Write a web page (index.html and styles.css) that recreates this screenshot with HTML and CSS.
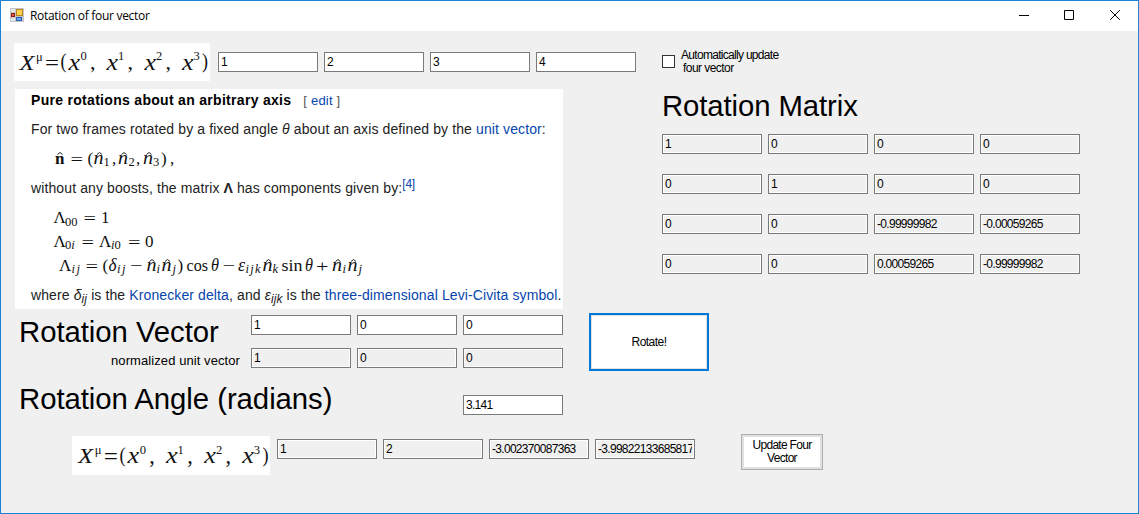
FILE: index.html
```html
<!DOCTYPE html>
<html lang="en">
<head>
<meta charset="utf-8">
<title>Rotation of four vector</title>
<link rel="stylesheet" href="styles.css">
</head>
<body>
<div class="window">
  <header class="titlebar">
    <svg class="app-icon" width="14" height="14" viewBox="0 0 14 14">
      <rect width="14" height="14" fill="#c4c6c9"/>
      <rect x="1" y="1" width="4" height="3" fill="#e6e7e9"/>
      <rect x="1" y="10" width="4" height="3" fill="#e6e7e9"/>
      <rect x="6.500" y="1.500" width="6" height="6" fill="#fbd04f" stroke="#b9861b"/>
      <rect x="1.500" y="5.500" width="3" height="3" fill="#d8584a" stroke="#961d17"/>
      <rect x="6.500" y="9.500" width="5" height="3" fill="#6ea6f0" stroke="#2b62b8"/>
    </svg>
    <span class="title">Rotation of four vector</span>
    <svg class="controls" width="102" height="11" viewBox="0 0 102 11" fill="none" stroke="#000">
      <path d="M0 5.500h10"/>
      <path d="M45.500 .5h9v9h-9z"/>
      <path d="M91.200 .2l9.600 9.600M100.800 .2l-9.600 9.600"/>
    </svg>
  </header>

  <main class="form">
    <div class="upper">
      <section class="left">
        <div class="input-row">
          <svg class="formula" width="196" height="38" viewBox="0 0 196 38">
            <g class="var"><text class="cap" x="5.500" y="26.500" textLength="15" lengthAdjust="spacingAndGlyphs">X</text><text x="54.500" y="26.500" textLength="11.500" lengthAdjust="spacingAndGlyphs">x</text><text x="92.500" y="26.500" textLength="11.500" lengthAdjust="spacingAndGlyphs">x</text><text x="130.500" y="26.500" textLength="11.500" lengthAdjust="spacingAndGlyphs">x</text><text x="168" y="26.500" textLength="11.500" lengthAdjust="spacingAndGlyphs">x</text></g>
            <g class="sup"><text x="22" y="17.500">μ</text><text x="66.500" y="17">0</text><text x="104" y="17">1</text><text x="142" y="17">2</text><text x="179.500" y="17">3</text></g>
            <g class="op"><text x="31" y="27" textLength="14" lengthAdjust="spacingAndGlyphs">=</text><text class="paren" x="46.500" y="25" textLength="6" lengthAdjust="spacingAndGlyphs">(</text><text x="76" y="26">,</text><text x="113.500" y="26">,</text><text x="151.500" y="26">,</text><text class="paren" x="188" y="25" textLength="6" lengthAdjust="spacingAndGlyphs">)</text></g>
          </svg>
          <div class="fields"><div class="field">1</div><div class="field">2</div><div class="field">3</div><div class="field">4</div></div>
        </div>

        <article class="wiki">
          <h3 class="wiki-title"><span class="wiki-name">Pure rotations about an arbitrary axis</span> <span class="edit">[ <a>edit</a> ]</span></h3>
          <p class="line-frames">For two frames rotated by a fixed angle <i>θ</i> about an axis defined by the <a>unit vector</a>:</p>
          <svg class="math" width="548" height="37" viewBox="15 140 548 37">
            <g class="n"><text x="93.500" y="164" textLength="10" lengthAdjust="spacingAndGlyphs">n</text><text x="118" y="164" textLength="10" lengthAdjust="spacingAndGlyphs">n</text><text x="143" y="164" textLength="10" lengthAdjust="spacingAndGlyphs">n</text></g>
            <g class="m"><text class="b" x="55" y="164">n</text><text x="70.500" y="165" textLength="12.500" lengthAdjust="spacingAndGlyphs">=</text><text x="87.500" y="164">(</text><text x="112" y="164">,</text><text x="136" y="164">,</text><text x="161" y="164">)</text><text x="170" y="164">,</text></g>
            <g class="s"><text x="103.500" y="166">1</text><text x="128.500" y="166">2</text><text x="153" y="166">3</text></g>
            <path class="hat" d="M57.500 154.500l2.500-2 2.500 2M97 154.500l2.500-2 2.500 2M121.500 154.500l2.500-2 2.500 2M146.500 154.500l2.500-2 2.500 2"/>
          </svg>
          <p class="line-boosts">without any boosts, the matrix <b>Λ</b> has components given by:<sup>[4]</sup></p>
          <svg class="math" width="548" height="85" viewBox="15 199 548 85">
            <g class="m">
              <text x="53.500" y="223">Λ</text><text x="83.500" y="224" textLength="12.500" lengthAdjust="spacingAndGlyphs">=</text><text x="101" y="223">1</text>
              <text x="53.500" y="247">Λ</text><text x="81.500" y="248" textLength="12.500" lengthAdjust="spacingAndGlyphs">=</text><text x="99" y="247">Λ</text><text x="128" y="248" textLength="12.500" lengthAdjust="spacingAndGlyphs">=</text><text x="145" y="247">0</text>
              <text x="59" y="271">Λ</text><text x="85.500" y="272" textLength="12.500" lengthAdjust="spacingAndGlyphs">=</text><text x="102.500" y="271">(</text><text x="130" y="271" textLength="12.500" lengthAdjust="spacingAndGlyphs">−</text><text x="177.500" y="271">)</text><text x="186.500" y="271" textLength="21.500" lengthAdjust="spacingAndGlyphs">cos</text><text x="222.500" y="271" textLength="12.500" lengthAdjust="spacingAndGlyphs">−</text><text x="281.500" y="271" textLength="21" lengthAdjust="spacingAndGlyphs">sin</text><text x="316" y="272" textLength="12.500" lengthAdjust="spacingAndGlyphs">+</text>
            </g>
            <g class="n"><text x="108.500" y="271" textLength="8" lengthAdjust="spacingAndGlyphs">δ</text><text x="146.500" y="271" textLength="10" lengthAdjust="spacingAndGlyphs">n</text><text x="161.500" y="271" textLength="10" lengthAdjust="spacingAndGlyphs">n</text><text x="211" y="271" textLength="8" lengthAdjust="spacingAndGlyphs">θ</text><text x="238" y="271">ε</text><text x="262.500" y="271" textLength="10" lengthAdjust="spacingAndGlyphs">n</text><text x="305" y="271" textLength="8" lengthAdjust="spacingAndGlyphs">θ</text><text x="332" y="271" textLength="10" lengthAdjust="spacingAndGlyphs">n</text><text x="347.500" y="271" textLength="10" lengthAdjust="spacingAndGlyphs">n</text></g>
            <g class="s"><text x="65" y="225.500">00</text><text x="65" y="249">0<tspan class="i">i</tspan></text><text x="111" y="249"><tspan class="i">i</tspan>0</text></g>
            <g class="s i"><text x="71.500" y="273" textLength="8.500">ij</text><text x="117" y="273" textLength="8.500">ij</text><text x="156.500" y="273">i</text><text x="172.500" y="273">j</text><text x="245.500" y="273" textLength="15">ijk</text><text x="272.500" y="273">k</text><text x="342.500" y="273">i</text><text x="358.500" y="273">j</text></g>
            <path class="hat" d="M149.500 261.500l2.500-2 2.500 2M165 261.500l2.500-2 2.500 2M266 261.500l2.500-2 2.500 2M335.500 261.500l2.500-2 2.500 2M351 261.500l2.500-2 2.500 2"/>
          </svg>
          <p class="line-where">where <i>δ<sub>ij</sub></i> is the <a>Kronecker delta</a>, and <i>ε<sub>ijk</sub></i> is the <a>three-dimensional Levi-Civita symbol</a>.</p>
        </article>

        <div class="rotation">
          <div class="labels">
            <h2>Rotation Vector</h2>
            <div class="norm">normalized unit vector</div>
            <h2 class="angle">Rotation Angle (radians)</h2>
          </div>
          <div class="vector">
            <div class="fields"><div class="field">1</div><div class="field">0</div><div class="field">0</div></div>
            <div class="fields"><div class="field ro">1</div><div class="field ro">0</div><div class="field ro">0</div></div>
            <div class="field radians">3.141</div>
          </div>
          <button class="rotate">Rotate!</button>
        </div>
      </section>

      <section class="right">
        <div class="auto">
          <span class="check"></span>
          <div class="auto-text"><div class="auto-first">Automatically update</div><div class="auto-second">four vector</div></div>
        </div>
        <h2 class="matrix-title">Rotation Matrix</h2>
        <div class="matrix">
          <div class="field ro">1</div><div class="field ro">0</div><div class="field ro">0</div><div class="field ro">0</div>
          <div class="field ro">0</div><div class="field ro">1</div><div class="field ro">0</div><div class="field ro">0</div>
          <div class="field ro">0</div><div class="field ro">0</div><div class="field ro">-0.99999982</div><div class="field ro">-0.00059265</div>
          <div class="field ro">0</div><div class="field ro">0</div><div class="field ro">0.00059265</div><div class="field ro">-0.99999982</div>
        </div>
      </section>
    </div>

    <div class="result">
      <svg class="formula" width="198" height="39" viewBox="-.5 -.6 196 38.600">
        <g class="var"><text class="cap" x="5.500" y="26.500" textLength="15" lengthAdjust="spacingAndGlyphs">X</text><text x="54.500" y="26.500" textLength="11.500" lengthAdjust="spacingAndGlyphs">x</text><text x="92.500" y="26.500" textLength="11.500" lengthAdjust="spacingAndGlyphs">x</text><text x="130.500" y="26.500" textLength="11.500" lengthAdjust="spacingAndGlyphs">x</text><text x="168" y="26.500" textLength="11.500" lengthAdjust="spacingAndGlyphs">x</text></g>
        <g class="sup"><text x="22" y="17.500">μ</text><text x="66.500" y="17">0</text><text x="104" y="17">1</text><text x="142" y="17">2</text><text x="179.500" y="17">3</text></g>
        <g class="op"><text x="31" y="27" textLength="14" lengthAdjust="spacingAndGlyphs">=</text><text class="paren" x="46.500" y="25" textLength="6" lengthAdjust="spacingAndGlyphs">(</text><text x="76" y="26">,</text><text x="113.500" y="26">,</text><text x="151.500" y="26">,</text><text class="paren" x="188" y="25" textLength="6" lengthAdjust="spacingAndGlyphs">)</text></g>
      </svg>
      <div class="fields"><div class="field ro">1</div><div class="field ro">2</div><div class="field ro">-3.002370087363</div><div class="field ro"><div class="clip">-3.99822133685817</div></div></div>
      <button class="update">Update Four<br>Vector</button>
    </div>
  </main>
</div>
</body>
</html>
```

FILE: styles.css
```css
* { box-sizing: border-box; }
body { margin: 0; font: 12px "Liberation Sans", Arial, sans-serif; color: #000; }
h2, h3, p { margin: 0; font-weight: normal; }
svg { display: block; flex: none; }

.window { width: 1139px; height: 514px; border: 1px solid #1883d7; background: #f0f0f0; overflow: hidden; }
.titlebar { height: 30px; background: #fff; display: flex; align-items: flex-start; padding: 7px 17px 0 9px; }
.title { margin: -1px 0 0 6px; font: 12px/18px "Open Sans", "Noto Sans", sans-serif; letter-spacing: -0.3px; white-space: nowrap; }
.controls { margin: 2px 0 0 auto; }

.form { padding: 12px 0 0 13px; }
.upper { display: flex; }
.left { width: 648px; flex: none; }

.input-row { display: flex; gap: 8px; }
.input-row .fields { margin-top: 9px; }
.fields { display: flex; gap: 6px; }
.field { width: 100px; height: 20px; flex: none; border: 1px solid #7a7a7a; background: #fff; padding-left: 2px; font-size: 12px; line-height: 18px; letter-spacing: -0.7px; white-space: nowrap; overflow: hidden; }
.field.ro { background: #f0f0f0; box-shadow: inset 0 0 0 1px #fff; }
.clip { width: 94px; overflow: hidden; }

.formula { background: #fff; font-family: "Liberation Serif", serif; fill: #111; }
.var { font-size: 23px; font-style: italic; }
.cap { font-size: 21px; }
.sup { font-size: 12.500px; }
.op { font-size: 22px; }
.paren { font-size: 21.500px; }

.wiki { margin: 8px 0 0 1px; width: 548px; height: 220px; background: #fff; font-size: 14px; line-height: 22px; color: #222; letter-spacing: 0.11px; }
.wiki p, .wiki-title { height: 22px; padding-left: 16px; white-space: nowrap; }
.wiki a { color: #0645ad; }
.wiki-title { font-size: 14px; margin-bottom: 7px; }
.wiki-name { font-weight: bold; color: #000; letter-spacing: 0.3px; }
.edit { font-size: 13px; margin-left: 8px; color: #555; letter-spacing: 0.2px; }
.wiki sub, .wiki sup { line-height: 0; font-size: 12px; }
.wiki sup { color: #0645ad; vertical-align: 5px; letter-spacing: -0.2px; }
.wiki sub { vertical-align: -3px; }
.math { font-family: "Liberation Serif", serif; fill: #111; letter-spacing: 0; }
.m { font-size: 17px; }
.n { font-size: 18px; font-style: italic; }
.s { font-size: 12.500px; }
.i { font-style: italic; }
.b { font-weight: bold; }
.hat { fill: none; stroke: #222; stroke-width: 1; }

.rotation { display: flex; align-items: flex-start; width: 695px; }
h2 { font-size: 29.330px; line-height: 34px; letter-spacing: -0.05px; white-space: nowrap; }
.labels { width: 232px; flex: none; margin: 6px 0 0 5px; }
.norm { width: 221px; margin-top: 4px; font-size: 13px; line-height: 16px; letter-spacing: 0.08px; text-align: right; }
.angle { margin-top: 13px; }
.vector { margin-top: 6px; display: flex; flex: none; flex-direction: column; gap: 13px; }
.radians { margin-top: 14px; align-self: flex-end; }

button { flex: none; font: 12px/13px "Liberation Sans", Arial, sans-serif; color: #000; background: #fff; padding: 0; text-align: center; border-radius: 0; }
.rotate { width: 120px; height: 58px; margin: 4px 0 0 26px; border: 2px solid #0078d7; box-shadow: inset 0 0 0 1px #e1e1e1; letter-spacing: -0.55px; }
.update { width: 82px; height: 36px; margin-left: 46px; border: 1px solid #adadad; box-shadow: inset 0 0 0 2px #e1e1e1; letter-spacing: -0.7px; }

.right { padding-top: 6px; }
.auto { display: flex; gap: 6px; height: 26px; }
.check { width: 13px; height: 13px; margin-top: 6px; border: 1px solid #333; background: #fff; }
.auto-text { line-height: 13px; letter-spacing: -0.7px; white-space: nowrap; }
.auto-second { padding-left: 2px; letter-spacing: -0.55px; }
.matrix-title { margin: 14px 0 11px 0; letter-spacing: -0.1px; }
.matrix { display: grid; grid-template-columns: repeat(4, 100px); gap: 20px 6px; }

.result { display: flex; align-items: flex-start; margin: 18px 0 0 58px; }
.result .formula { margin-top: 2px; }
.result .fields { margin: 5px 0 0 7px; }
```
